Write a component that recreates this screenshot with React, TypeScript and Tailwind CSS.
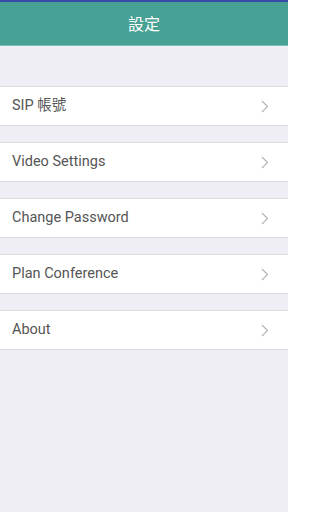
import React from 'react';

const items = ['SIP 帳號', 'Video Settings', 'Change Password', 'Plan Conference', 'About'];

function Chevron() {
  return (
    <svg width="8" height="13" viewBox="0 0 8 13" fill="none" className="mr-[19px]">
      <path d="M1 1l5.5 5.5L1 12" stroke="#b4b4b8" strokeWidth="1.1" />
    </svg>
  );
}

export default function App() {
  return (
    <div
      className="w-[288px] h-[512px] bg-[#efeef4] flex flex-col"
      style={{ fontFamily: 'Roboto, "Noto Sans CJK TC", sans-serif' }}
    >
      {/* Header */}
      <div className="border-t-[2px] border-[#3949ab]">
        <div className="h-[44px] bg-[#48a195] flex items-center justify-center border-b border-[#7fbcb3]">
          <span className="text-white text-[16px] pt-[2px]">設定</span>
        </div>
      </div>

      {/* Menu */}
      <div className="flex flex-col gap-[16px] pt-[40px]">
        {items.map((label) => (
          <div
            key={label}
            className="h-[40px] bg-white border-y border-[#dcdcdf] flex items-center justify-between"
          >
            <span className="pl-[12px] text-[14.5px] text-[#555555]">{label}</span>
            <Chevron />
          </div>
        ))}
      </div>
    </div>
  );
}
